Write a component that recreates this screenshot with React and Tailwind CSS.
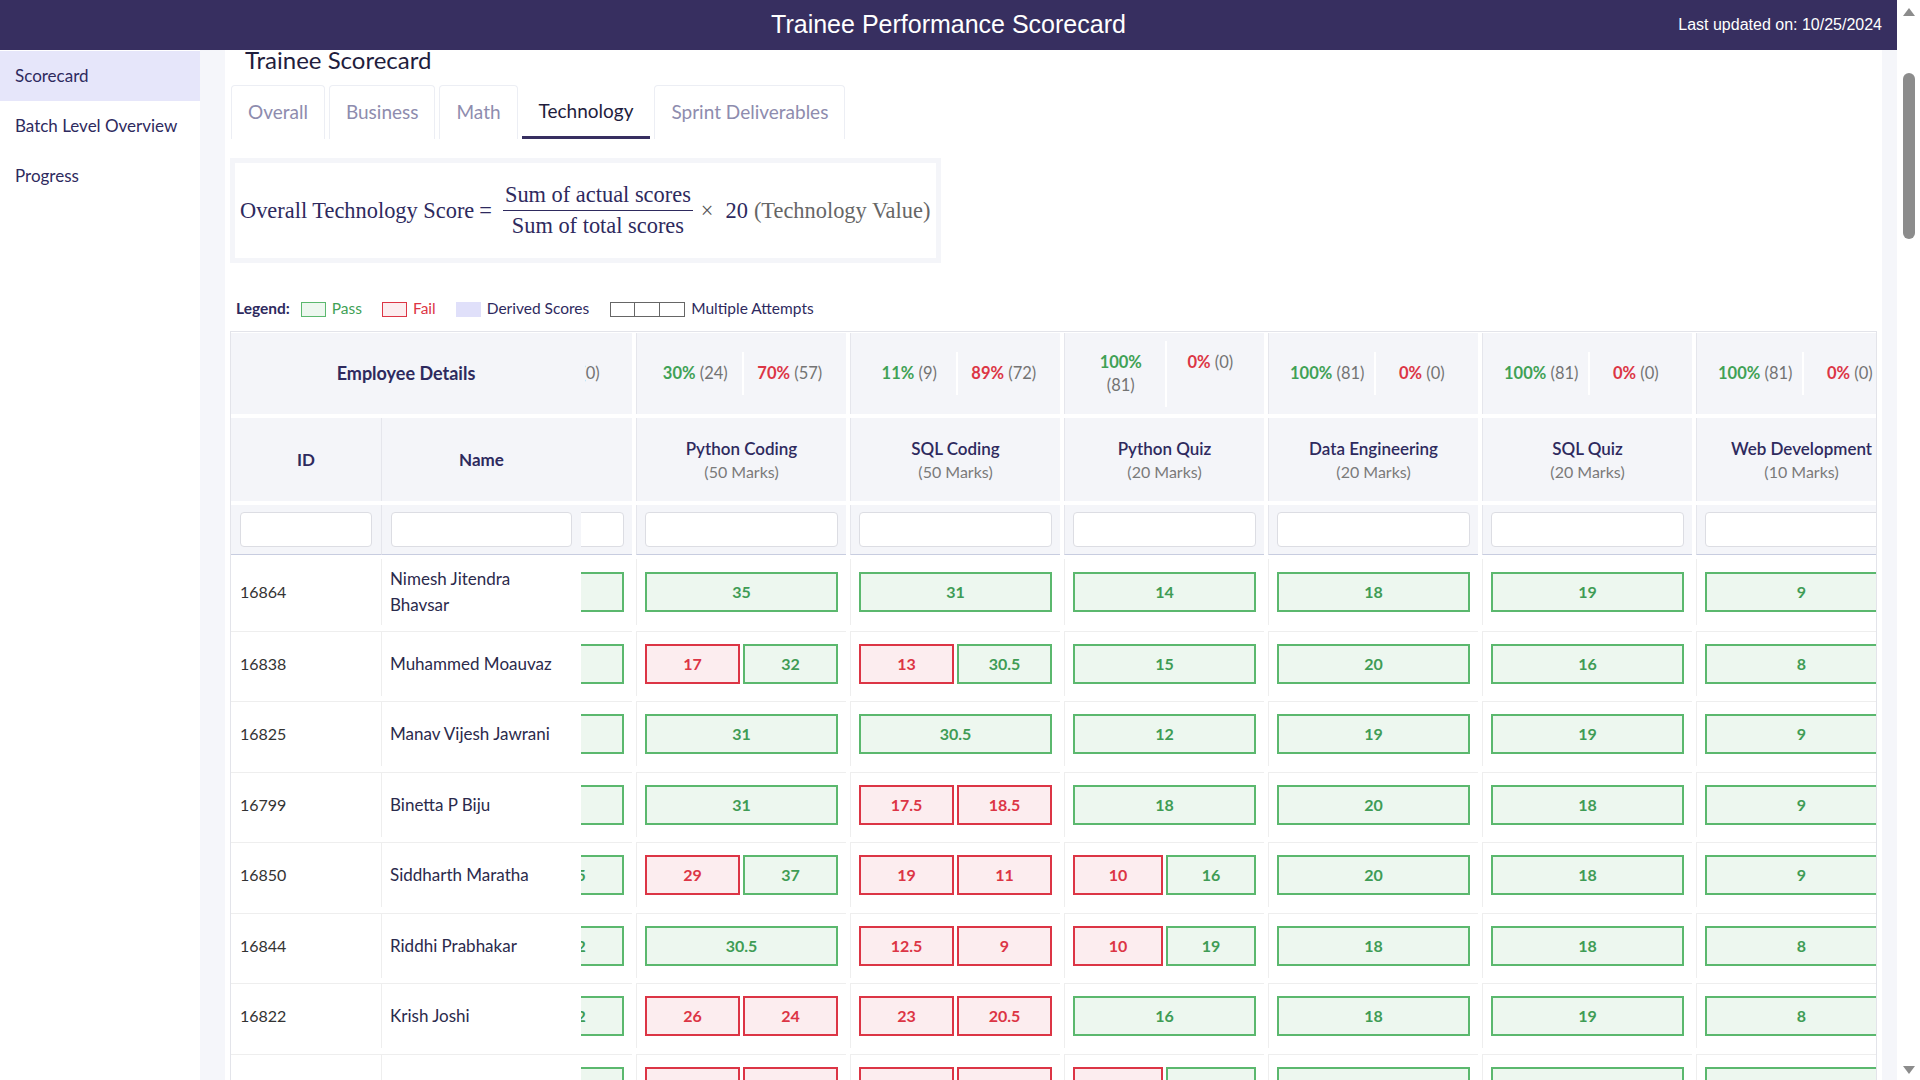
import React from 'react';

const g = (v) => ({ v, p: true });
const r = (v) => ({ v, p: false });

const columns = [
  { title: 'Cloud Basics', marks: 20, pass: '100%', pc: 81, fail: '0%', fc: 0, w: 'w-[210px]', hidden: true },
  { title: 'Python Coding', marks: 50, pass: '30%', pc: 24, fail: '70%', fc: 57, w: 'w-[210px]' },
  { title: 'SQL Coding', marks: 50, pass: '11%', pc: 9, fail: '89%', fc: 72, w: 'w-[210px]' },
  { title: 'Python Quiz', marks: 20, pass: '100%', pc: 81, fail: '0%', fc: 0, w: 'w-[200px]', wrap: true },
  { title: 'Data Engineering', marks: 20, pass: '100%', pc: 81, fail: '0%', fc: 0, w: 'w-[210px]' },
  { title: 'SQL Quiz', marks: 20, pass: '100%', pc: 81, fail: '0%', fc: 0, w: 'w-[210px]' },
  { title: 'Web Development', marks: 10, pass: '100%', pc: 81, fail: '0%', fc: 0, w: 'w-[210px]' },
];

const knownRows = [
  { id: '16864', name: 'Nimesh Jitendra Bhavsar', s: [[g(18)], [g(35)], [g(31)], [g(14)], [g(18)], [g(19)], [g(9)]] },
  { id: '16838', name: 'Muhammed Moauvaz', s: [[g(17)], [r(17), g(32)], [r(13), g('30.5')], [g(15)], [g(20)], [g(16)], [g(8)]] },
  { id: '16825', name: 'Manav Vijesh Jawrani', s: [[g(16)], [g(31)], [g('30.5')], [g(12)], [g(19)], [g(19)], [g(9)]] },
  { id: '16799', name: 'Binetta P Biju', s: [[g(17)], [g(31)], [r('17.5'), r('18.5')], [g(18)], [g(20)], [g(18)], [g(9)]] },
  { id: '16850', name: 'Siddharth Maratha', s: [[r(8), g(15)], [r(29), g(37)], [r(19), r(11)], [r(10), g(16)], [g(20)], [g(18)], [g(9)]] },
  { id: '16844', name: 'Riddhi Prabhakar', s: [[r(9), g(12)], [g('30.5')], [r('12.5'), r(9)], [r(10), g(19)], [g(18)], [g(18)], [g(8)]] },
  { id: '16822', name: 'Krish Joshi', s: [[r(7), g(12)], [r(26), r(24)], [r(23), r('20.5')], [g(16)], [g(18)], [g(19)], [g(8)]] },
  { id: '16871', name: 'Aditya Kumar', s: [[g(14)], [r(21), r(19)], [r(15), r(22)], [r(9), g(17)], [g(19)], [g(17)], [g(9)]] },
];

const firstNames = ['Aarav', 'Priya', 'Rohan', 'Sneha', 'Vikram', 'Ananya', 'Karthik', 'Meera', 'Arjun', 'Divya', 'Rahul', 'Pooja'];
const lastNames = ['Sharma', 'Nair', 'Patel', 'Iyer', 'Reddy', 'Menon', 'Gupta', 'Kulkarni', 'Das', 'Pillai'];

const extraRows = Array.from({ length: 73 }, (_, i) => ({
  id: String(16700 + ((i * 37) % 170)),
  name: `${firstNames[i % firstNames.length]} ${lastNames[(i * 7) % lastNames.length]}`,
  s: [
    [g(12 + (i % 8))],
    (i % 3 === 0) ? [r(18 + (i % 6)), r(20 + (i % 5))] : [g(30 + (i % 9))],
    (i % 2 === 0) ? [r(14 + (i % 7)), r(19 + (i % 4))] : [g(28 + (i % 6))],
    [g(11 + (i % 9))],
    [g(16 + (i % 5))],
    [g(15 + (i % 6))],
    [g(7 + (i % 4))],
  ],
}));

const rows = [...knownRows, ...extraRows];

function Box({ item }) {
  return item.p ? (
    <div className="flex-1 h-[40px] flex items-center justify-center border-2 border-[#5bb86e] bg-[#edf7ef] text-[#3f9c55] font-bold text-[16px]">
      {item.v}
    </div>
  ) : (
    <div className="flex-1 h-[40px] flex items-center justify-center border-2 border-[#dc3545] bg-[#fcedef] text-[#dc3545] font-bold text-[16px]">
      {item.v}
    </div>
  );
}

function Clip({ children, narrow }) {
  return (
    <div className={`${narrow ? 'w-[47px]' : 'w-[51px]'} shrink-0 overflow-hidden flex justify-end`}>{children}</div>
  );
}

function StatsCell({ c }) {
  return (
    <div className={`${c.w} shrink-0 h-full bg-[#f4f5f9] border-l border-[#e5e6ec] flex items-center`}>
      <div className="flex w-full text-[16.5px] leading-[23px]">
        <div className="flex-1 pl-[18px] pr-[6px] py-[10px] text-center whitespace-nowrap">
          <span className="font-bold text-[#3fa155]">{c.pass}</span>
          {c.wrap ? <br /> : ' '}
          <span className="text-[#737373]">({c.pc})</span>
        </div>
        <div className={`flex-1 ${c.hidden ? 'pl-[7px] pr-[15px]' : 'pl-[6px] pr-[16px]'} py-[10px] text-center whitespace-nowrap border-l-2 border-white`}>
          <span className="font-bold text-[#dc3545]">{c.fail}</span>{' '}
          <span className="text-[#737373]">({c.fc})</span>
        </div>
      </div>
    </div>
  );
}

function TitleCell({ c }) {
  return (
    <div className={`${c.w} shrink-0 h-full bg-[#f4f5f9] border-l border-[#e5e6ec] flex flex-col items-center justify-center leading-[23px]`}>
      <div className="font-semibold text-[17px] text-[#2e2a5e] whitespace-nowrap">{c.title}</div>
      <div className="text-[16px] text-[#7a7a7a]">({c.marks} Marks)</div>
    </div>
  );
}

function FilterCell({ c }) {
  return (
    <div className={`${c.w} shrink-0 h-full bg-[#f4f5f9] border-l border-[#e5e6ec] border-b border-b-[#c8cde0] flex items-center px-[8px]`}>
      <input type="text" className="w-full h-[35px] rounded-[4px] border border-[#dcdde3] bg-white" />
    </div>
  );
}

function ScoreCell({ c, items, first }) {
  return (
    <div className={`${c.w} shrink-0 h-full border-l border-[#eeeeee] ${first ? '' : 'border-t'} flex items-center gap-[3px] px-[8px]`}>
      {items.map((it, k) => (
        <Box key={k} item={it} />
      ))}
    </div>
  );
}

function Table() {
  const [hidden, ...visible] = columns;
  return (
    <div className="mt-[12px] border border-b-0 border-[#e3e4ea] overflow-hidden pt-[1px]">
      <div className="flex flex-col gap-[4px]">
        <div className="flex h-[81px]">
          <div className="flex shrink-0">
            <div className="w-[354px] shrink-0 bg-[#f4f5f9] flex items-center justify-center pr-[4px] font-bold text-[18px] text-[#2e2a5e]">
              Employee Details
            </div>
            <Clip narrow>
              <StatsCell c={hidden} />
            </Clip>
          </div>
          {visible.map((c, i) => (
            <div key={i} className="ml-[4px] shrink-0 h-full">
              <StatsCell c={c} />
            </div>
          ))}
        </div>
        <div className="flex h-[83px]">
          <div className="flex shrink-0">
            <div className="w-[150px] shrink-0 bg-[#f4f5f9] flex items-center justify-center font-bold text-[17px] text-[#2e2a5e]">ID</div>
            <div className="w-[200px] shrink-0 bg-[#f4f5f9] border-l border-[#e5e6ec] flex items-center justify-center font-bold text-[17px] text-[#2e2a5e]">Name</div>
            <Clip>
              <TitleCell c={hidden} />
            </Clip>
          </div>
          {visible.map((c, i) => (
            <div key={i} className="ml-[4px] shrink-0 h-full">
              <TitleCell c={c} />
            </div>
          ))}
        </div>
        <div className="flex h-[50px]">
          <div className="flex shrink-0">
            <div className="w-[150px] shrink-0 bg-[#f4f5f9] border-b border-b-[#c8cde0] flex items-center px-[9px]">
              <input type="text" className="w-full h-[35px] rounded-[4px] border border-[#dcdde3] bg-white" />
            </div>
            <div className="w-[200px] shrink-0 bg-[#f4f5f9] border-l border-[#e5e6ec] border-b border-b-[#c8cde0] flex items-center pl-[9px] pr-[9px]">
              <input type="text" className="w-full h-[35px] rounded-[4px] border border-[#dcdde3] bg-white" />
            </div>
            <Clip>
              <FilterCell c={hidden} />
            </Clip>
          </div>
          {visible.map((c, i) => (
            <div key={i} className="ml-[4px] shrink-0 h-full">
              <FilterCell c={c} />
            </div>
          ))}
        </div>
      </div>
      <div className="mt-[4px] flex flex-col gap-[5.5px]">
        {rows.map((row, ri) => {
          const first = ri === 0;
          return (
            <div key={ri} className={`flex ${first ? 'h-[66px]' : 'h-[65px]'}`}>
              <div className="flex shrink-0">
                <div className={`w-[150px] shrink-0 ${first ? '' : 'border-t'} border-[#eeeeee] flex items-center pl-[9px] text-[16px] text-[#333333]`}>
                  {row.id}
                </div>
                <div className={`w-[200px] shrink-0 border-l border-[#eeeeee] ${first ? '' : 'border-t'} flex items-center pl-[8px] pr-[8px] text-[17px] leading-[26px] text-[#2b2a4c]`}>
                  {row.name}
                </div>
                <Clip>
                  <ScoreCell c={hidden} items={row.s[0]} first={first} />
                </Clip>
              </div>
              {visible.map((c, i) => (
                <div key={i} className="ml-[4px] shrink-0 h-full">
                  <ScoreCell c={c} items={row.s[i + 1]} first={first} />
                </div>
              ))}
            </div>
          );
        })}
      </div>
    </div>
  );
}

function Formula() {
  return (
    <div className="mt-[19px] w-[711px] h-[105px] border-[5px] border-[#f4f5f9] bg-white flex items-center pl-[5px] font-['Liberation_Serif',serif] text-[22.4px] text-[#2e2a5e] whitespace-nowrap">
      <span>Overall Technology Score</span>
      <span className="ml-[5px] mr-[11px]">=</span>
      <span className="inline-flex flex-col items-center leading-[24px]">
        <span className="px-[2px]">Sum of actual scores</span>
        <span className="w-full border-t-[1.5px] border-[#2e2a5e] mt-[3px] mb-[3px]"></span>
        <span className="px-[2px]">Sum of total scores</span>
      </span>
      <span className="ml-[8px] mr-[12px] text-[#555]">×</span>
      <span className="text-[#2e2a5e]">20</span>
      <span className="ml-[6px] text-[#666666]">(Technology Value)</span>
    </div>
  );
}

function Legend() {
  return (
    <div className="mt-[36px] h-[20px] pl-[6px] flex items-center text-[15.5px]">
      <span className="font-bold text-[#2e2a5e]">Legend:</span>
      <span className="ml-[11px] w-[25px] h-[15px] border border-[#5bb86e] bg-[#edf7ef]"></span>
      <span className="ml-[6px] text-[#3fa155]">Pass</span>
      <span className="ml-[20px] w-[25px] h-[15px] border border-[#dc3545] bg-[#fcedef]"></span>
      <span className="ml-[6px] text-[#dc3545]">Fail</span>
      <span className="ml-[20px] w-[25px] h-[15px] bg-[#e0e0fa]"></span>
      <span className="ml-[6px] text-[#2e2a5e]">Derived Scores</span>
      <span className="ml-[21px] flex">
        <span className="w-[25px] h-[15px] border border-[#666666]"></span>
        <span className="w-[25px] h-[15px] border border-l-0 border-[#666666]"></span>
        <span className="w-[25px] h-[15px] border border-l-0 border-[#666666]"></span>
      </span>
      <span className="ml-[6px] text-[#2e2a5e]">Multiple Attempts</span>
    </div>
  );
}

function Tabs() {
  const tabs = ['Overall', 'Business', 'Math', 'Technology', 'Sprint Deliverables'];
  return (
    <div className="mt-[14px] ml-[1px] flex items-end gap-[4px]">
      {tabs.map((t) =>
        t === 'Technology' ? (
          <div key={t} className="h-[55px] pt-[3px] px-[17px] flex items-center border-b-[3px] border-[#372f60] text-[19px] text-[#1f1d3d]">
            {t}
          </div>
        ) : (
          <div key={t} className="h-[54px] px-[16px] flex items-center border border-b-0 border-[#eceef4] rounded-t-[4px] text-[19px] text-[#8e8cae]">
            {t}
          </div>
        )
      )}
    </div>
  );
}

function ScrollBar() {
  return (
    <div className="w-[23px] shrink-0 h-full bg-white flex flex-col items-center">
      <svg className="mt-[8px]" width="12" height="8" viewBox="0 0 12 8">
        <polygon points="6,0 12,8 0,8" fill="#8c8c8c" />
      </svg>
      <div className="mt-[57px] w-[12px] h-[166px] rounded-full bg-[#8c8c8c]"></div>
      <svg className="mt-auto mb-[6px]" width="12" height="8" viewBox="0 0 12 8">
        <polygon points="0,0 12,0 6,8" fill="#8c8c8c" />
      </svg>
    </div>
  );
}

export default function App() {
  return (
    <div className="h-screen flex font-['Lato',sans-serif] text-[#2e2a5e]">
      <div className="flex-1 min-w-0 h-full overflow-y-auto bg-[#f5f6fa]">
        <header className="sticky top-0 z-20 h-[50px] bg-[#372f60] grid grid-cols-[1fr_auto_1fr] items-center px-[15px] font-['Liberation_Sans',Arial,sans-serif] text-white">
          <div></div>
          <div className="text-[25px]">Trainee Performance Scorecard</div>
          <div className="justify-self-end text-[16px]">Last updated on: 10/25/2024</div>
        </header>
        <div className="flex">
          <aside className="w-[200px] shrink-0 bg-white pt-[1px]">
            <div className="h-[50px] flex items-center px-[15px] bg-[#e6e6fa] text-[17px] text-[#2e2a5e]">Scorecard</div>
            <div className="h-[50px] flex items-center px-[15px] text-[17px] text-[#2e2a5e]">Batch Level Overview</div>
            <div className="h-[50px] flex items-center px-[15px] text-[17px] text-[#2e2a5e]">Progress</div>
          </aside>
          <main className="flex-1 min-w-0 ml-[25px] mr-[15px] bg-white px-[5px]">
            <h1 className="pl-[15px] text-[24px] leading-[20px] text-[#1f1d3d]">Trainee Scorecard</h1>
            <Tabs />
            <Formula />
            <Legend />
            <Table />
          </main>
        </div>
      </div>
      <ScrollBar />
    </div>
  );
}
